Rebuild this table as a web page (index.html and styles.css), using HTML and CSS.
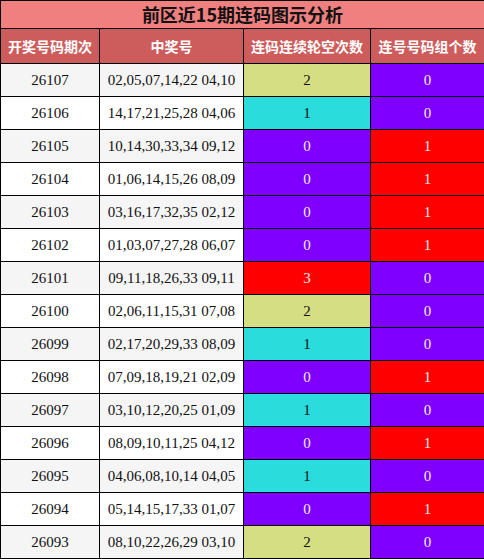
FILE: index.html
```html
<!DOCTYPE html>
<html lang="zh">
<head>
    <meta charset="UTF-8">
    <meta name="viewport" content="width=device-width, initial-scale=1.0">
    <title>前区近15期连码图示分析</title>
    <link rel="stylesheet" href="styles.css">
</head>
<body>
    <table class="chart">
        <colgroup>
            <col class="col-period">
            <col class="col-nums">
            <col class="col-gap">
            <col class="col-count">
        </colgroup>
        <thead>
            <tr><th colspan="4" class="title">前区近15期连码图示分析</th></tr>
            <tr class="head">
                <th>开奖号码期次</th>
                <th>中奖号</th>
                <th>连码连续轮空次数</th>
                <th>连号号码组个数</th>
            </tr>
        </thead>
        <tbody>
            <tr><td>26107</td><td>02,05,07,14,22 04,10</td><td class="c-yellow">2</td><td class="c-purple">0</td></tr>
            <tr><td>26106</td><td>14,17,21,25,28 04,06</td><td class="c-cyan">1</td><td class="c-purple">0</td></tr>
            <tr><td>26105</td><td>10,14,30,33,34 09,12</td><td class="c-purple">0</td><td class="c-red">1</td></tr>
            <tr><td>26104</td><td>01,06,14,15,26 08,09</td><td class="c-purple">0</td><td class="c-red">1</td></tr>
            <tr><td>26103</td><td>03,16,17,32,35 02,12</td><td class="c-purple">0</td><td class="c-red">1</td></tr>
            <tr><td>26102</td><td>01,03,07,27,28 06,07</td><td class="c-purple">0</td><td class="c-red">1</td></tr>
            <tr><td>26101</td><td>09,11,18,26,33 09,11</td><td class="c-red">3</td><td class="c-purple">0</td></tr>
            <tr><td>26100</td><td>02,06,11,15,31 07,08</td><td class="c-yellow">2</td><td class="c-purple">0</td></tr>
            <tr><td>26099</td><td>02,17,20,29,33 08,09</td><td class="c-cyan">1</td><td class="c-purple">0</td></tr>
            <tr><td>26098</td><td>07,09,18,19,21 02,09</td><td class="c-purple">0</td><td class="c-red">1</td></tr>
            <tr><td>26097</td><td>03,10,12,20,25 01,09</td><td class="c-cyan">1</td><td class="c-purple">0</td></tr>
            <tr><td>26096</td><td>08,09,10,11,25 04,12</td><td class="c-purple">0</td><td class="c-red">1</td></tr>
            <tr><td>26095</td><td>04,06,08,10,14 04,05</td><td class="c-cyan">1</td><td class="c-purple">0</td></tr>
            <tr><td>26094</td><td>05,14,15,17,33 01,07</td><td class="c-purple">0</td><td class="c-red">1</td></tr>
            <tr><td>26093</td><td>08,10,22,26,29 03,10</td><td class="c-yellow">2</td><td class="c-purple">0</td></tr>
        </tbody>
    </table>
</body>
</html>
```
FILE: styles.css
```css
body {
    margin: 0;
    background-color: white;
}
.chart {
    border-collapse: collapse;
    table-layout: fixed;
    width: 484px;
    font-family: 'Liberation Serif', serif;
    font-size: 15px;
    color: #111;
}
.col-period { width: 99px; }
.col-nums { width: 144px; }
.col-gap { width: 127px; }
.col-count { width: 114px; }
.chart th,
.chart td {
    border: 1px solid #000;
    text-align: center;
    padding: 0;
}
.title {
    height: 27px;
    background-color: #f08080;
    color: #111;
    font-family: 'Noto Sans CJK SC', sans-serif;
    font-size: 18px;
    font-weight: bold;
    line-height: 27px;
}
.head th {
    height: 34px;
    background-color: #cd5c5c;
    color: white;
    font-family: 'Noto Sans CJK SC', sans-serif;
    font-size: 14px;
    font-weight: bold;
}
.chart tbody td {
    height: 32px;
}
.chart tbody tr:nth-child(odd) {
    background-color: #f5f5f5;
}
.c-yellow { background-color: #d6de84; }
.c-cyan { background-color: #2adcdc; }
.c-purple { background-color: #8000ff; color: #eee; }
.c-red { background-color: #ff0000; color: #eee; }
```
